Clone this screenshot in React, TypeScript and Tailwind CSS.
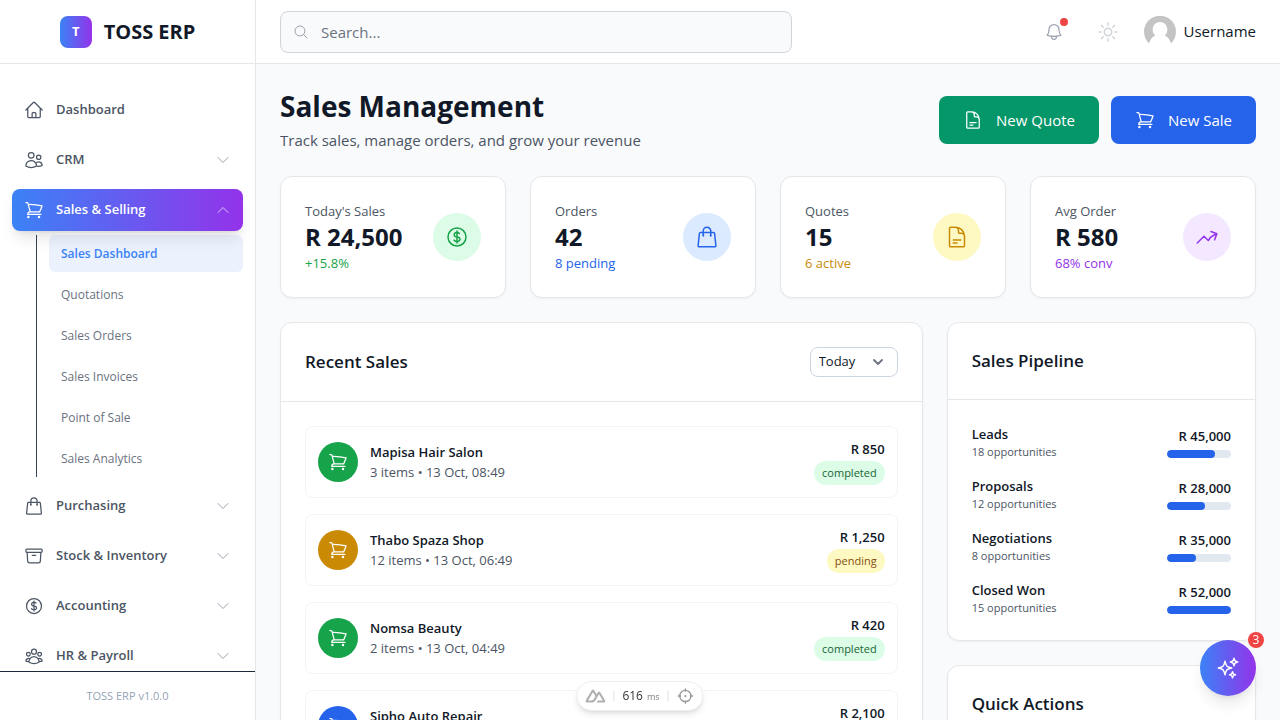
import { useState } from "react";
import type { ComponentType, SVGProps } from "react";
import {
  HiOutlineArchiveBox,
  HiOutlineArrowTrendingUp,
  HiOutlineBell,
  HiOutlineChevronDown,
  HiOutlineChevronUp,
  HiOutlineCurrencyDollar,
  HiOutlineDocumentText,
  HiOutlineHome,
  HiOutlineMagnifyingGlass,
  HiOutlineShoppingBag,
  HiOutlineShoppingCart,
  HiOutlineSparkles,
  HiOutlineSun,
  HiOutlineUserGroup,
  HiOutlineUsers,
} from "react-icons/hi2";

type Icon = ComponentType<SVGProps<SVGSVGElement>>;

const salesPages = [
  "Sales Dashboard",
  "Quotations",
  "Sales Orders",
  "Sales Invoices",
  "Point of Sale",
  "Sales Analytics",
];

const stats: { label: string; value: string; note: string; noteClass: string; circleClass: string; icon: Icon }[] = [
  { label: "Today's Sales", value: "R 24,500", note: "+15.8%", noteClass: "text-[#16a34a]", circleClass: "bg-[#dcfce7] text-[#16a34a]", icon: HiOutlineCurrencyDollar as Icon },
  { label: "Orders", value: "42", note: "8 pending", noteClass: "text-[#2563eb]", circleClass: "bg-[#dbeafe] text-[#2563eb]", icon: HiOutlineShoppingBag as Icon },
  { label: "Quotes", value: "15", note: "6 active", noteClass: "text-[#ca8a04]", circleClass: "bg-[#fef9c3] text-[#ca8a04]", icon: HiOutlineDocumentText as Icon },
  { label: "Avg Order", value: "R 580", note: "68% conv", noteClass: "text-[#9333ea]", circleClass: "bg-[#f3e8ff] text-[#9333ea]", icon: HiOutlineArrowTrendingUp as Icon },
];

const statusStyles = {
  completed: { circle: "bg-[#16a34a]", badge: "bg-[#dcfce7] text-[#166534]" },
  pending: { circle: "bg-[#ca8a04]", badge: "bg-[#fef9c3] text-[#854d0e]" },
  processing: { circle: "bg-[#2563eb]", badge: "bg-[#dbeafe] text-[#1e40af]" },
};

const sales: { customer: string; detail: string; amount: string; status: keyof typeof statusStyles }[] = [
  { customer: "Mapisa Hair Salon", detail: "3 items • 13 Oct, 08:49", amount: "R 850", status: "completed" },
  { customer: "Thabo Spaza Shop", detail: "12 items • 13 Oct, 06:49", amount: "R 1,250", status: "pending" },
  { customer: "Nomsa Beauty", detail: "2 items • 13 Oct, 04:49", amount: "R 420", status: "completed" },
  { customer: "Sipho Auto Repair", detail: "8 items • 13 Oct, 02:49", amount: "R 2,100", status: "processing" },
];

const pipeline = [
  { stage: "Leads", count: 18, amount: "R 45,000", percent: 75 },
  { stage: "Proposals", count: 12, amount: "R 28,000", percent: 60 },
  { stage: "Negotiations", count: 8, amount: "R 35,000", percent: 45 },
  { stage: "Closed Won", count: 15, amount: "R 52,000", percent: 100 },
];

function NavGroup({ icon: IconEl, label }: { icon: Icon; label: string }) {
  return (
    <button
      type="button"
      className="flex h-[42px] w-full shrink-0 items-center gap-3 rounded-lg px-3 text-[13px] font-semibold text-[#4b5563]"
    >
      <IconEl className="size-5" />
      <span className="flex-1 text-left">{label}</span>
      <HiOutlineChevronDown className="size-4 text-[#9ca3af]" />
    </button>
  );
}

function Sidebar() {
  return (
    <aside className="flex w-64 shrink-0 flex-col border-r border-[#e5e7eb] bg-white">
      <div className="flex h-16 shrink-0 items-center justify-center gap-3 border-b border-[#e5e7eb]">
        <div className="flex size-8 items-center justify-center rounded-lg bg-linear-to-r/srgb from-[#3b82f6] to-[#9333ea] text-[13px] font-bold text-white">
          T
        </div>
        <span className="text-xl font-bold text-[#111827]">TOSS ERP</span>
      </div>
      <nav className="flex min-h-0 flex-1 flex-col gap-2 overflow-hidden px-3 pt-[25px]">
        <a
          href="#dashboard"
          className="flex h-[42px] shrink-0 items-center gap-3 rounded-lg px-3 text-[13px] font-semibold text-[#4b5563]"
        >
          <HiOutlineHome className="size-5" />
          Dashboard
        </a>
        <NavGroup icon={HiOutlineUsers as Icon} label="CRM" />
        <div className="shrink-0">
          <button
            type="button"
            aria-expanded="true"
            className="flex h-[42px] w-full items-center gap-3 rounded-lg bg-linear-to-r/srgb from-[#3b82f6] to-[#9333ea] px-3 text-[13px] font-semibold text-white shadow-lg"
          >
            <HiOutlineShoppingCart className="size-5" />
            <span className="flex-1 text-left">Sales &amp; Selling</span>
            <HiOutlineChevronUp className="size-4 text-white/70" />
          </button>
          <ul className="mt-1 ml-6 flex flex-col gap-1 border-l border-[#334155] pl-3 text-xs">
            {salesPages.map((page, i) => (
              <li key={page}>
                <a
                  href="#sales"
                  className={
                    i === 0
                      ? "flex h-[37px] items-center rounded-md bg-[#3b82f6]/10 px-3 font-semibold text-[#3b82f6]"
                      : "flex h-[37px] items-center rounded-md px-3 text-[#6b7280]"
                  }
                >
                  {page}
                </a>
              </li>
            ))}
          </ul>
        </div>
        <NavGroup icon={HiOutlineShoppingBag as Icon} label="Purchasing" />
        <NavGroup icon={HiOutlineArchiveBox as Icon} label="Stock & Inventory" />
        <NavGroup icon={HiOutlineCurrencyDollar as Icon} label="Accounting" />
        <NavGroup icon={HiOutlineUserGroup as Icon} label="HR & Payroll" />
      </nav>
      <div className="shrink-0 border-t border-[#1e293b] bg-white p-4 text-center text-[11px] leading-4 text-[#94a3b8]">
        TOSS ERP v1.0.0
      </div>
    </aside>
  );
}

function Topbar() {
  return (
    <header className="flex h-16 shrink-0 items-center justify-between border-b border-[#e5e7eb] bg-white px-6">
      <label className="flex h-[42px] w-full max-w-lg items-center gap-3 rounded-lg border border-[#d1d5db] bg-[#f9fafb] px-3">
        <HiOutlineMagnifyingGlass className="size-4 text-[#9ca3af]" />
        <input
          type="search"
          aria-label="Search"
          placeholder="Search..."
          className="h-full min-w-0 flex-1 bg-transparent text-[15px] text-[#111827] outline-none placeholder:text-[#6b7280]"
        />
      </label>
      <div className="flex items-center">
        <button type="button" aria-label="Notifications" className="relative p-2 text-[#9ca3af]">
          <HiOutlineBell className="size-5" />
          <span className="absolute top-1 right-1 size-2 rounded-full bg-[#ef4444]" />
        </button>
        <button type="button" aria-label="Toggle theme" className="ml-4 p-2 text-[#d1d5db]">
          <HiOutlineSun className="size-6" />
        </button>
        <button type="button" className="ml-4 flex items-center gap-2 text-[15px] text-[#111827]">
          <svg viewBox="0 0 32 32" className="size-8" aria-hidden="true">
            <path
              d="M5 27.4A16 16 0 1 1 27 27.4C25.9 23.6 23.8 21 20.8 19.6A7.3 7.3 0 0 0 23.3 13.500C23.3 9 20 6 16 6S8.7 9 8.7 13.5A7.3 7.3 0 0 0 11.2 19.6C8.2 21 6.1 23.6 5 27.4Z"
              fill="#c4c4c4"
            />
          </svg>
          Username
        </button>
      </div>
    </header>
  );
}

function RecentSales() {
  const [range, setRange] = useState("Today");
  return (
    <section className="rounded-xl border border-[#e5e7eb] bg-white shadow-xs lg:col-span-2">
      <div className="flex items-center justify-between border-b border-[#e5e7eb] p-6">
        <h2 className="text-[17px] leading-7 font-semibold text-[#111827]">Recent Sales</h2>
        <div className="relative">
          <select
            aria-label="Period"
            value={range}
            onChange={(e) => setRange(e.target.value)}
            className="h-[30px] w-22 appearance-none rounded-lg border border-[#cbd5e1] bg-white px-2 text-[13px] text-[#111827]"
          >
            <option>Today</option>
            <option>Week</option>
            <option>Month</option>
          </select>
          <svg viewBox="0 0 20 20" className="pointer-events-none absolute top-[5px] right-[10px] size-5" aria-hidden="true">
            <path d="M6 8l4 4 4-4" fill="none" stroke="#6b7280" strokeWidth="1.8" strokeLinecap="round" strokeLinejoin="round" />
          </svg>
        </div>
      </div>
      <ul className="flex flex-col gap-4 p-6">
        {sales.map((sale) => (
          <li key={sale.customer} className="flex items-center gap-3 rounded-lg border border-[#f3f4f6] p-3">
            <span
              className={`flex size-10 shrink-0 items-center justify-center rounded-full text-white ${statusStyles[sale.status].circle}`}
            >
              <HiOutlineShoppingCart className="size-5" />
            </span>
            <div className="flex-1 text-[13px] leading-5">
              <p className="font-semibold text-[#111827]">{sale.customer}</p>
              <p className="text-[#4b5563]">{sale.detail}</p>
            </div>
            <div className="flex flex-col items-end gap-0.5">
              <p className="text-[13px] leading-5 font-semibold text-[#111827]">{sale.amount}</p>
              <span className={`rounded-full px-2 py-1 text-[11px] leading-4 font-medium ${statusStyles[sale.status].badge}`}>
                {sale.status}
              </span>
            </div>
          </li>
        ))}
      </ul>
    </section>
  );
}

function Pipeline() {
  return (
    <section className="rounded-xl border border-[#e5e7eb] bg-white shadow-xs">
      <h2 className="border-b border-[#e5e7eb] p-6 text-[17px] leading-7 font-semibold text-[#111827]">Sales Pipeline</h2>
      <ul className="flex flex-col gap-4 p-6">
        {pipeline.map((row) => (
          <li key={row.stage} className="flex items-center justify-between">
            <div>
              <p className="text-[13px] leading-5 font-semibold text-[#111827]">{row.stage}</p>
              <p className="text-[11px] leading-4 text-[#4b5563]">{row.count} opportunities</p>
            </div>
            <div className="flex flex-col items-end gap-1">
              <p className="text-[13px] leading-5 font-semibold text-[#111827]">{row.amount}</p>
              <div className="h-2 w-16 overflow-hidden rounded-full bg-[#e2e8f0]">
                <div className="h-2 rounded-full bg-[#2563eb]" style={{ width: `${row.percent}%` }} />
              </div>
            </div>
          </li>
        ))}
      </ul>
    </section>
  );
}

function DevPill() {
  return (
    <div className="fixed bottom-[9px] left-1/2 flex h-[30px] -translate-x-1/2 items-center rounded-full border border-[#eeeeee] bg-white px-2 shadow-md">
      <svg viewBox="0 0 24 24" className="size-5 text-[#b0b0b0]" fill="currentColor" aria-hidden="true">
        <path d="M13.464 19.83h8.922c.283 0 .562-.073.807-.21a1.6 1.6 0 0 0 .591-.574 1.53 1.53 0 0 0 .216-.783 1.53 1.53 0 0 0-.217-.782L17.792 7.414a1.6 1.6 0 0 0-.591-.573 1.65 1.65 0 0 0-.807-.21c-.283 0-.562.073-.807.21a1.6 1.6 0 0 0-.59.573L13.463 9.99 10.47 4.953a1.6 1.6 0 0 0-.591-.573 1.65 1.65 0 0 0-.807-.21c-.284 0-.562.073-.807.21a1.6 1.6 0 0 0-.591.573L.216 17.481a1.53 1.53 0 0 0-.217.782c0 .275.074.545.216.783a1.6 1.6 0 0 0 .59.574c.246.137.525.21.808.21h5.6c2.22 0 3.856-.946 4.982-2.79l2.733-4.593 1.464-2.457 4.395 7.382h-5.859Zm-6.341-2.46-3.908-.002 5.858-9.842 2.923 4.921-1.957 3.29c-.748 1.196-1.597 1.632-2.916 1.632" />
      </svg>
      <span className="ml-2 h-[10px] w-px bg-[#dddddd]" />
      <span className="ml-2 flex items-baseline gap-1 text-xs text-[#333333]">
        616<span className="text-[9px] text-[#808080]">ms</span>
      </span>
      <span className="ml-2 h-[10px] w-px bg-[#dddddd]" />
      <svg viewBox="0 0 24 24" className="ml-2 size-[18px] text-[#999999]" fill="none" stroke="currentColor" strokeWidth="1.8" strokeLinecap="round" aria-hidden="true">
        <circle cx="12" cy="12" r="7.5" />
        <path d="M12 2.500v3M12 18.500v3M2.500 12h3M18.500 12h3" />
        <circle cx="12" cy="12" r="0.6" />
      </svg>
    </div>
  );
}

export default function App() {
  return (
    <div className="flex h-screen overflow-hidden bg-[#f9fafc] font-['Open_Sans',sans-serif]">
      <Sidebar />
      <div className="flex min-w-0 flex-1 flex-col">
        <Topbar />
        <main className="flex min-h-0 flex-1 flex-col gap-6 overflow-hidden p-6">
          <div className="flex shrink-0 items-center justify-between">
            <div>
              <h1 className="text-[28px] leading-9 font-bold text-[#111827]">Sales Management</h1>
              <p className="mt-1 text-[15px] leading-6 text-[#4b5563]">Track sales, manage orders, and grow your revenue</p>
            </div>
            <div className="flex gap-3">
              <button type="button" className="flex h-12 items-center gap-[13px] rounded-lg bg-[#059669] px-6 text-[15px] text-white">
                <HiOutlineDocumentText className="size-5" />
                New Quote
              </button>
              <button type="button" className="flex h-12 items-center gap-[13px] rounded-lg bg-[#2563eb] px-6 text-[15px] text-white">
                <HiOutlineShoppingCart className="size-5" />
                New Sale
              </button>
            </div>
          </div>
          <div className="grid shrink-0 grid-cols-2 gap-6 lg:grid-cols-4">
            {stats.map(({ icon: IconEl, ...stat }) => (
              <div
                key={stat.label}
                className="flex items-center justify-between rounded-xl border border-[#e5e7eb] bg-white p-6 shadow-xs"
              >
                <div>
                  <p className="text-[13px] leading-5 text-[#4b5563]">{stat.label}</p>
                  <p className="text-2xl leading-8 font-bold text-[#111827]">{stat.value}</p>
                  <p className={`text-[13px] leading-5 ${stat.noteClass}`}>{stat.note}</p>
                </div>
                <span className={`flex size-12 items-center justify-center rounded-full ${stat.circleClass}`}>
                  <IconEl className="size-6" />
                </span>
              </div>
            ))}
          </div>
          <div className="grid shrink-0 items-start gap-6 lg:grid-cols-3">
            <RecentSales />
            <div className="flex flex-col gap-6">
              <Pipeline />
              <section className="rounded-xl border border-[#e5e7eb] bg-white shadow-xs">
                <h2 className="border-b border-[#e5e7eb] p-6 text-[17px] leading-7 font-semibold text-[#111827]">
                  Quick Actions
                </h2>
              </section>
            </div>
          </div>
        </main>
      </div>
      <button
        type="button"
        aria-label="Open assistant"
        className="fixed right-6 bottom-6 flex size-14 items-center justify-center rounded-full bg-linear-to-r/srgb from-[#3b82f6] to-[#9333ea] text-white shadow-lg"
      >
        <HiOutlineSparkles className="size-6" />
        <span className="absolute -top-2 -right-2 flex size-4 items-center justify-center rounded-full bg-[#ef4444] text-xs leading-4">
          3
        </span>
      </button>
      <DevPill />
    </div>
  );
}
